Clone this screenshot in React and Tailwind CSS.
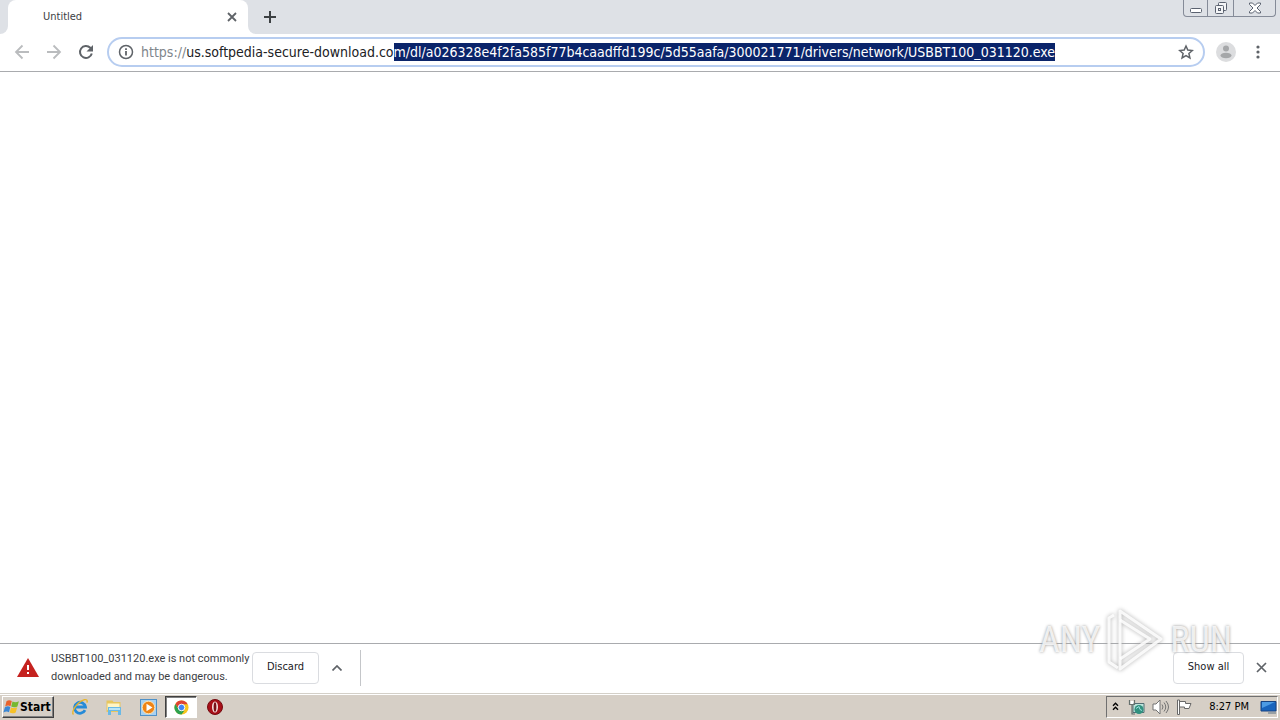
import { useEffect, useRef } from "react";

const HOST = "us.softpedia-secure-download.co";
const REST =
  "m/dl/a026328e4f2fa585f77b4caadffd199c/5d55aafa/300021771/drivers/network/USBBT100_031120.exe";

function TabStrip() {
  return (
    <header className="flex h-[34px] items-stretch bg-[#dee1e6]">
      <div className="w-2 bg-white">
        <div className="h-full rounded-br-lg bg-[#dee1e6]" />
      </div>
      <div className="flex w-60 items-center justify-between rounded-t-lg bg-white pr-2 pl-[35px]">
        <span className="text-[11px] leading-4 text-[#3c4043]">Untitled</span>
        <button type="button" aria-label="Close tab" className="flex size-4 items-center justify-center">
          <svg width="10" height="10" viewBox="0 0 10 10" stroke="#5f6368" strokeWidth="1.8">
            <path d="M1 1l8 8M9 1L1 9" />
          </svg>
        </button>
      </div>
      <div className="w-2 bg-white">
        <div className="h-full rounded-bl-lg bg-[#dee1e6]" />
      </div>
      <button type="button" aria-label="New tab" className="flex w-7 items-center justify-center">
        <svg width="12" height="12" viewBox="0 0 12 12" stroke="#3c4043" strokeWidth="2">
          <path d="M6 0v12M0 6h12" />
        </svg>
      </button>
      <div className="mr-1 ml-auto flex h-[17px] rounded-b-[4px] border border-t-0 border-[#858b98] text-[#5b6270]">
        <button type="button" aria-label="Minimize" className="flex w-6 items-center justify-center border-r border-[#858b98]">
          <svg width="12" height="16" viewBox="0 0 12 16" fill="#fff" stroke="currentColor">
            <rect x=".5" y="8.500" width="11" height="4" rx="1" />
          </svg>
        </button>
        <button type="button" aria-label="Restore" className="flex w-[26px] items-center justify-center border-r border-[#858b98]">
          <svg width="14" height="14" viewBox="0 0 14 14" fill="#f4f5f7" stroke="currentColor">
            <rect x="4.500" y="1.500" width="8" height="8" rx="1" />
            <rect x="1.500" y="4.500" width="8" height="8" rx="1" />
            <rect x="4.500" y="7.500" width="2" height="2" />
          </svg>
        </button>
        <button type="button" aria-label="Close" className="flex w-[41px] items-center justify-center">
          <svg width="12" height="12" viewBox="0 0 12 12" fill="#fff" stroke="currentColor">
            <path d="M.5 1h3L6 3.500 8.500 1h3v1.500L8 6l3.500 3.500V11h-3L6 8.500 3.500 11h-3V9.500L4 6 .5 2.500z" />
          </svg>
        </button>
      </div>
    </header>
  );
}

function Toolbar() {
  const address = useRef(null);

  useEffect(() => {
    const el = address.current;
    el.focus();
    el.setSelectionRange(HOST.length, HOST.length + REST.length);
  }, []);

  return (
    <div className="flex h-[38px] items-center border-b border-[#a9abae] bg-white pr-[14px] pb-[2px] pl-[14px]">
      <div className="flex gap-4 text-[#babcbe]">
        <button type="button" aria-label="Back">
          <svg width="16" height="16" viewBox="0 0 16 16" fill="none" stroke="currentColor" strokeWidth="1.8">
            <path d="M15 8H2M8.500 1.500L2 8l6.500 6.500" />
          </svg>
        </button>
        <button type="button" aria-label="Forward">
          <svg width="16" height="16" viewBox="0 0 16 16" fill="none" stroke="currentColor" strokeWidth="1.8">
            <path d="M1 8h13M7.500 1.500L14 8l-6.500 6.500" />
          </svg>
        </button>
        <button type="button" aria-label="Reload" className="text-[#5f6368]">
          <svg width="16" height="16" viewBox="0 0 16 16" fill="none" stroke="currentColor" strokeWidth="2">
            <path d="M13.800 9.500A6 6 0 1 1 12.300 3.800L14 5.500" />
            <path d="M15 1v6.500H8.500z" fill="currentColor" stroke="none" />
          </svg>
        </button>
      </div>
      <div className="ml-[13px] flex h-[30px] min-w-0 flex-1 items-center rounded-full border-2 border-[#b7cdf0] bg-white px-[9px]">
        <button type="button" aria-label="Site information" className="mr-[7px] shrink-0">
          <svg width="16" height="16" viewBox="0 0 16 16" fill="none" stroke="#5f6368" strokeWidth="1.500">
            <circle cx="8" cy="8" r="6.500" />
            <path d="M8 7v4.500M8 4.300v1.600" strokeWidth="1.800" />
          </svg>
        </button>
        <label htmlFor="address" className="text-[14px] leading-[18px] text-[#80868b]">https://</label>
        <input
          id="address"
          ref={address}
          type="text"
          spellCheck={false}
          defaultValue={HOST + REST}
          className="h-[18px] min-w-0 flex-1 bg-transparent text-[14px] leading-[18px] text-[#202124] outline-none selection:bg-[#0a246a] selection:text-white"
        />
        <button type="button" aria-label="Bookmark this page" className="shrink-0">
          <svg width="16" height="16" viewBox="0 0 16 16" fill="none" stroke="#5f6368" strokeWidth="1.500">
            <path d="M8 2l1.800 4.100 4.500.4-3.400 3 1 4.400L8 11.600l-3.900 2.300 1-4.400-3.400-3 4.500-.4z" />
          </svg>
        </button>
      </div>
      <button type="button" aria-label="Profile" className="ml-[11px]">
        <svg width="20" height="20" viewBox="0 0 20 20">
          <circle cx="10" cy="10" r="10" fill="#dcdddf" />
          <circle cx="10" cy="6.500" r="3" fill="#a5a7a9" />
          <ellipse cx="10" cy="13.500" rx="5.500" ry="2.800" fill="#a5a7a9" />
        </svg>
      </button>
      <button type="button" aria-label="Menu" className="ml-[14px]">
        <svg width="16" height="16" viewBox="0 0 16 16" fill="#5f6368">
          <circle cx="8" cy="3" r="1.600" />
          <circle cx="8" cy="8" r="1.600" />
          <circle cx="8" cy="13" r="1.600" />
        </svg>
      </button>
    </div>
  );
}

function DownloadShelf() {
  return (
    <section aria-label="Downloads" className="flex h-[50px] items-center border-t border-[#a9abae] bg-white pr-[13px] pb-[2px] pl-4 text-[11px] text-[#3c4043]">
      <svg width="24" height="24" viewBox="0 0 24 24" className="shrink-0">
        <path d="M12 2L23 21H1z" fill="#c5221f" />
        <path d="M11 9h2v5h-2zM11 16h2v2h-2z" fill="#fff" />
      </svg>
      <p className="ml-[11px] w-[201px] font-['Noto_Sans_SemiCondensed','Roboto',sans-serif] leading-[18px] whitespace-nowrap">
        USBBT100_031120.exe is not commonly
        <br />
        downloaded and may be dangerous.
      </p>
      <button type="button" className="h-8 w-[67px] rounded-[4px] border border-[#dadce0] text-[#202124]">Discard</button>
      <button type="button" aria-label="More options" className="ml-[10px] flex size-4 items-center justify-center">
        <svg width="10" height="6" viewBox="0 0 10 6" fill="none" stroke="#5f6368" strokeWidth="1.700">
          <path d="M.5 5.500L5 1l4.500 4.500" />
        </svg>
      </button>
      <div className="ml-[15px] h-9 w-px bg-[#c4c6c9]" />
      <button type="button" className="ml-auto h-8 w-[71px] rounded-[4px] border border-[#dadce0] text-[#202124]">Show all</button>
      <button type="button" aria-label="Close downloads bar" className="ml-3">
        <svg width="11" height="11" viewBox="0 0 11 11" stroke="#5f6368" strokeWidth="1.700">
          <path d="M1 1l9 9M10 1l-9 9" />
        </svg>
      </button>
    </section>
  );
}

function WindowsFlag() {
  return (
    <svg width="17" height="16" viewBox="0 0 17 16">
      <path d="M3.500 2.300C5.500 .8 7 1.100 8.800 2.100L7.500 7.200C5.800 6.200 4.200 6.300 2.200 7.500z" fill="#e8622c" />
      <path d="M9.500 2.500c2 1 3.900 1 6.400-.2L14.400 7.400c-2.200 1.200-4.300 1.100-6.200.2z" fill="#76b82f" />
      <path d="M1.900 8.300c2-1.200 3.700-1.200 5.400-.2L6 13.200C4.200 12.200 2.500 12.400.4 13.500z" fill="#3b87d4" />
      <path d="M8 8.400c2 1 4 .9 6.200-.2l-1.500 5.200c-2.100 1.200-4.100 1.100-6 .1z" fill="#f6c128" />
    </svg>
  );
}

function Taskbar() {
  return (
    <footer className="flex h-[27px] items-center border-t border-[#d4d0c8] bg-[#d6cfc6] pr-[2px] pl-[2px] text-[11px] text-black shadow-[inset_0_1px_0_#fff]">
      <button type="button" className="flex h-[22px] w-[52px] items-center border border-t-white border-r-[#404040] border-b-[#404040] border-l-white text-[12px] font-bold shadow-[inset_-1px_-1px_0_#808080]">
        <WindowsFlag />
        <span>Start</span>
      </button>
      <nav aria-label="Quick launch" className="ml-[9px] flex items-center">
        <button type="button" aria-label="Internet Explorer" className="flex w-[34px] justify-center">
          <svg width="18" height="18" viewBox="0 0 18 18" fill="none">
            <path d="M14 12.200a5.500 5.500 0 1 1 .5-3.200H5" stroke="#268bd8" strokeWidth="2.800" />
            <path d="M2.500 16.500C-.5 14.500 6 4 13 1.800c3-.8 3.800.8 2.800 2.800" stroke="#e8b52c" strokeWidth="1.400" />
          </svg>
        </button>
        <button type="button" aria-label="File Explorer" className="flex w-[34px] justify-center">
          <svg width="18" height="18" viewBox="0 0 18 18">
            <path d="M1.500 2.500h6l1 1.500h7V14h-14z" fill="#e7c65e" />
            <path d="M2.500 5.500h12V12h-12z" fill="#fff5c5" />
            <path d="M3 9h13v8h-3v-4H6v4H3z" fill="#69b9e6" />
            <path d="M4 10h11v2H4z" fill="#b8e4f7" />
          </svg>
        </button>
        <button type="button" aria-label="Media Player" className="flex w-[34px] justify-center">
          <svg width="17" height="17" viewBox="0 0 17 17">
            <rect x=".5" y=".5" width="16" height="16" fill="#a8d1f1" stroke="#4f91c8" />
            <circle cx="8.500" cy="8.500" r="6.300" fill="#ee8416" stroke="#ffe3b0" />
            <path d="M6.500 4.800l6 3.700-6 3.700z" fill="#fff" />
          </svg>
        </button>
        <button type="button" aria-label="Chrome" className="flex h-[22px] w-8 items-center justify-center border border-t-[#404040] border-r-white border-b-white border-l-[#404040] bg-white shadow-[inset_1px_1px_0_#808080]">
          <svg width="15" height="15" viewBox="0 0 16 16">
            <circle cx="8" cy="8" r="7.500" fill="#f7c51e" />
            <path d="M1.500 4.200A7.500 7.500 0 0 1 14.500 4.500H8L4.900 9.600z" fill="#df4333" />
            <path d="M1.500 4.200L4.900 9.800 8 11.500h3L8 15.500A7.500 7.500 0 0 1 1.500 4.200z" fill="#2da14f" />
            <circle cx="8" cy="8" r="3.500" fill="#4285f4" stroke="#fff" />
          </svg>
        </button>
        <button type="button" aria-label="Opera" className="ml-px flex w-[34px] justify-center">
          <svg width="16" height="16" viewBox="0 0 16 16">
            <circle cx="8" cy="8" r="7.500" fill="#a80f18" stroke="#740b10" />
            <ellipse cx="8" cy="8" rx="3" ry="5.500" fill="#f8e5e3" />
            <ellipse cx="8" cy="8" rx="1.400" ry="4.800" fill="#781017" />
          </svg>
        </button>
      </nav>
      <div className="ml-auto flex h-[22px] items-center border border-t-[#707070] border-r-white border-b-white border-l-[#707070] pl-[3px]">
        <button type="button" aria-label="Show hidden icons" className="flex w-[10px] justify-center">
          <svg width="7" height="10" viewBox="0 0 7 10" fill="none" stroke="#000" strokeWidth="1.400">
            <path d="M1 3.700l2.500-2.500L6 3.700M1 7.700l2.500-2.500L6 7.700" />
          </svg>
        </button>
        <svg width="17" height="17" viewBox="0 0 17 17" className="ml-2" aria-label="Network">
          <path d="M5 4.500h11v9H5z" fill="#bce4db" stroke="#526e74" />
          <circle cx="11" cy="10.500" r="4.500" fill="#31917f" />
          <path d="M8 9.500l3-2 1 3 2 1" stroke="#9ee0e0" fill="none" />
          <path d="M1.500 1v4.500h5V1M4 5v10h3" fill="none" stroke="#66716e" strokeWidth="1.200" />
          <path d="M2.500 2h3v3h-3z" fill="#fff" />
        </svg>
        <svg width="17" height="16" viewBox="0 0 17 16" fill="none" stroke="#737373" className="ml-[7px]" aria-label="Volume">
          <path d="M1 5h3l4-4v14l-4-4H1z" fill="#fff" />
          <path d="M10 5.500q2 2.500 0 5M12 3.500q3.500 4.500 0 9M14 2q5 6 0 12" />
        </svg>
        <svg width="17" height="16" viewBox="0 0 17 16" fill="#fff" stroke="#686868" className="ml-[7px]" aria-label="Action center">
          <path d="M1.500 1v14.500h2V1zM3.500 2.500h6v2H15l-2 5H8.500V8h-5z" />
        </svg>
        <time className="ml-4 whitespace-nowrap">8:27 PM</time>
        <button type="button" aria-label="Show desktop" className="ml-[11px]">
          <svg width="17" height="16" viewBox="0 0 17 16">
            <path d="M1 2.500h15V12H1z" fill="#1864bd" stroke="#174381" />
            <path d="M2 3h13L2 9z" fill="#4c9be4" />
            <path d="M8 13.500h8v1H8z" fill="#5a7084" />
          </svg>
        </button>
      </div>
    </footer>
  );
}

function Watermark() {
  return (
    <div className="pointer-events-none absolute right-12 bottom-12 flex items-center gap-[7px] font-['Roboto_Condensed','Roboto',sans-serif] text-[36px] leading-none text-white/80 [text-shadow:0_0_3px_#909090]">
      <span>ANY</span>
      <svg width="56" height="64" viewBox="0 0 56 64" fill="none" strokeLinejoin="round" className="drop-shadow-[0_0_2px_#a0a0a0]">
        <g stroke="#fff" strokeOpacity=".85" strokeWidth="3">
          <path d="M13 3L54 31 13 61V3z" />
          <path d="M7 7L2 10v44l9 6M13 12l30 19-30 20" />
        </g>
      </svg>
      <span>RUN</span>
    </div>
  );
}

export default function App() {
  return (
    <div className="relative flex min-h-screen flex-col bg-white font-['DejaVu_Sans_Condensed','DejaVu_Sans',sans-serif]">
      <TabStrip />
      <Toolbar />
      <main className="flex-1 bg-white" />
      <DownloadShelf />
      <Taskbar />
      <Watermark />
    </div>
  );
}
